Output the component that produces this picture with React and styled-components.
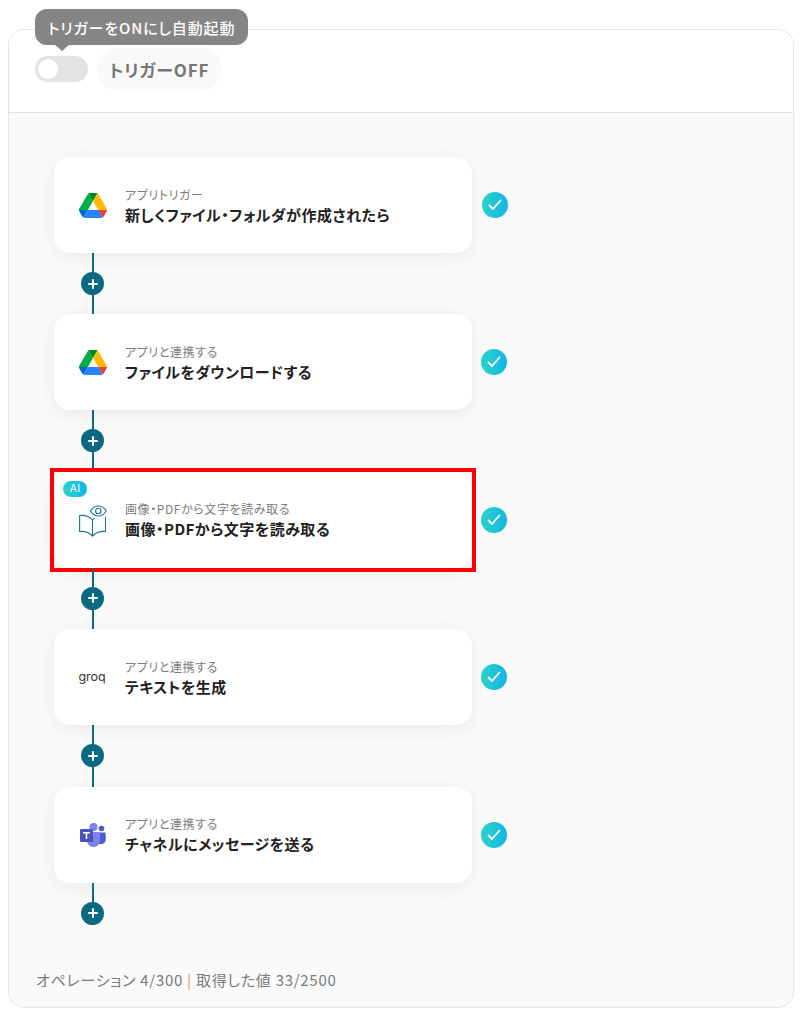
import styled, { createGlobalStyle } from 'styled-components'

const Global = createGlobalStyle`
  html, body {
    margin: 0;
    padding: 0;
    background: #fff;
    font-family: "Noto Sans CJK JP", "Noto Sans", sans-serif;
    font-feature-settings: "palt";
  }
  * { box-sizing: border-box; }
`

const Page = styled.div`
  width: 804px;
  height: 1019px;
  padding: 29px 10px 11px 8px;
`

const Panel = styled.div`
  height: 979px;
  border: 1px solid #e6e6e6;
  border-radius: 16px;
  background: #fafafa;
  display: flex;
  flex-direction: column;
`

const Header = styled.div`
  position: relative;
  height: 83px;
  flex: none;
  background: #fff;
  border-bottom: 1px solid #e3e3e3;
  border-radius: 15px 15px 0 0;
  padding: 17px 0 0 26px;
  display: flex;
  align-items: flex-start;
  gap: 9px;
`

const Tooltip = styled.div`
  position: absolute;
  left: 26px;
  top: -21px;
  height: 36px;
  width: 213px;
  padding: 0 0 0 13px;
  display: flex;
  align-items: center;
  border-radius: 12px;
  background: #858585;
  color: #fff;
  font-size: 15px;
  font-weight: 500;
  letter-spacing: 0.85px;
  white-space: nowrap;

  &::after {
    content: '';
    position: absolute;
    left: 20px;
    bottom: -6px;
    border-left: 7px solid transparent;
    border-right: 7px solid transparent;
    border-top: 6px solid #858585;
  }
`

const Toggle = styled.div`
  width: 53px;
  height: 26px;
  margin-top: 9px;
  border-radius: 13px;
  background: #e3e3e3;
  padding: 3px;
`

const Knob = styled.div`
  width: 20px;
  height: 20px;
  border-radius: 50%;
  background: #fff;
`

const TriggerLabel = styled.div`
  height: 44px;
  width: 125px;
  padding-left: 12px;
  border-radius: 22px;
  background: #f9f9f9;
  color: #767676;
  font-size: 17px;
  font-weight: 700;
  letter-spacing: 0.85px;
  display: flex;
  align-items: center;
`

const Flow = styled.div`
  flex: 1;
  padding: 44px 0 0 45px;
`

const StepRow = styled.div`
  display: flex;
  align-items: center;
  gap: ${p => p.$gap || 9}px;
`

const Card = styled.div`
  position: relative;
  width: 418px;
  height: 96px;
  flex: none;
  border-radius: 16px;
  background: #fff;
  box-shadow: 0 4px 20px rgba(0, 0, 0, 0.07);
  display: flex;
  align-items: center;
  padding-left: 20px;

  ${p => p.$selected && `
    &::after {
      content: '';
      position: absolute;
      inset: -4px;
      border: 4px solid #ff0000;
    }
  `}
`

const AiBadge = styled.div`
  position: absolute;
  left: 9px;
  top: 9px;
  width: 24px;
  height: 16px;
  border-radius: 8px;
  background: linear-gradient(90deg, #2bd4c8, #12b5e6);
  color: #fff;
  font-family: "Inter", sans-serif;
  font-size: 10.5px;
  font-weight: 400;
  letter-spacing: 0.3px;
  display: flex;
  align-items: center;
  justify-content: center;
`

const IconBox = styled.div`
  width: 38px;
  height: 38px;
  flex: none;
  display: flex;
  align-items: center;
  justify-content: center;
`

const GroqMark = styled.span`
  font-family: "Inter", sans-serif;
  font-size: 12.5px;
  font-weight: 400;
  letter-spacing: -0.1px;
  color: #333;
  transform: translate(-1px, -1px);
`

const CardText = styled.div`
  margin-left: 13px;
  margin-top: 2px;
  display: flex;
  flex-direction: column;
  gap: 0;
`

const SubLabel = styled.div`
  color: #7c7c7c;
  font-size: 12px;
  line-height: 18px;
  letter-spacing: 0.6px;
  margin-bottom: -1px;
`

const Title = styled.div`
  color: #222;
  font-size: 15px;
  font-weight: 700;
  line-height: 24px;
  letter-spacing: 0.48px;
`

const CheckBadge = styled.div`
  width: 26px;
  height: 26px;
  border-radius: 50%;
  background: linear-gradient(90deg, #2bd4c8, #12b5e6);
  display: flex;
  align-items: center;
  justify-content: center;
`

const Connector = styled.div`
  position: relative;
  width: 2px;
  height: 61.4px;
  margin-left: 38px;
  background: #0b6a80;
  ${p => p.$end && 'height: 31px;'}
`

const AddButton = styled.div`
  position: absolute;
  left: -11px;
  top: 19px;
  width: 23px;
  height: 23px;
  border-radius: 50%;
  background: #0b6a80;
  display: flex;
  align-items: center;
  justify-content: center;
`

const Footer = styled.div`
  flex: none;
  padding: 0 0 15px 27px;
  color: #7b7b7b;
  font-size: 15px;
  line-height: 24px;
  letter-spacing: 0.72px;
`

const Divider = styled.span`
  color: #d8a26a;
`

const DriveIcon = () => (
  <svg width="28" height="25" viewBox="0 0 87.3 78">
    <path d="m6.6 66.85 3.85 6.65c.8 1.4 1.95 2.5 3.3 3.3l13.75-23.8h-27.5c0 1.55.4 3.1 1.2 4.5z" fill="#0066da" />
    <path d="m43.65 25-13.75-23.8c-1.35.8-2.5 1.9-3.3 3.3l-25.4 44a9.06 9.06 0 0 0 -1.2 4.5h27.5z" fill="#00ac47" />
    <path d="m73.55 76.8c1.35-.8 2.5-1.9 3.3-3.3l1.6-2.75 7.65-13.25c.8-1.4 1.2-2.95 1.2-4.5h-27.502l5.852 11.5z" fill="#ea4335" />
    <path d="m43.65 25 13.75-23.8c-1.35-.8-2.9-1.2-4.5-1.2h-18.5c-1.6 0-3.15.45-4.5 1.2z" fill="#00832d" />
    <path d="m59.8 53h-32.3l-13.75 23.8c1.35.8 2.9 1.2 4.5 1.2h50.8c1.6 0 3.15-.45 4.5-1.2z" fill="#2684fc" />
    <path d="m73.4 26.5-12.7-22c-.8-1.4-1.95-2.5-3.3-3.3l-13.75 23.8 16.15 28h27.45c0-1.55-.4-3.1-1.2-4.5z" fill="#ffba00" />
  </svg>
)

const BookSvg = styled.svg`
  margin-top: 2px;
`

const BookIcon = () => (
  <BookSvg width="30" height="32" viewBox="-1 0 30 32" fill="none" stroke="#1f7488" strokeWidth="1.1" strokeLinejoin="round" strokeLinecap="round">
    <path d="M13.500 15C10.500 11.500 5 10 0.600 10.500V26.500C5 26 10 27.500 13.500 31V15z" />
    <path d="M13.500 15c.5-.6 1-1.200 1.600-1.700M13.500 31C17 27.500 22 26 26.500 26.500V12" />
    <path d="M11.500 6C13.500 2.700 16.500 1 19.300 1S25.200 2.700 27.300 6C25.200 9.200 22.100 11 19.300 11S13.500 9.200 11.500 6z" />
    <circle cx="19.300" cy="6" r="2.700" />
  </BookSvg>
)

const TeamsIcon = () => (
  <svg width="26" height="24" viewBox="0 0 26 24">
    <circle cx="21.500" cy="5.500" r="2.800" fill="#5059c9" />
    <path d="M18 9.500h6.500c.6 0 1.200.5 1.200 1.200v6c0 2.500-2 4.300-4.300 4.300H18z" fill="#5059c9" />
    <circle cx="13.500" cy="4" r="4" fill="#7b83eb" />
    <path d="M8 9h11c.6 0 1 .4 1 1v7.500c0 3.600-2.900 6.500-6.500 6.500S7 21.100 7 17.500V10c0-.6.400-1 1-1z" fill="#7b83eb" />
    <rect x="0" y="6" width="13" height="13" rx="1.200" fill="#4b53bc" />
    <path d="M3 9h7v1.500H7.300V16H5.700v-5.500H3z" fill="#fff" />
  </svg>
)

const CheckMark = () => (
  <svg width="14" height="12" viewBox="0 0 14 12" fill="none" stroke="#fff" strokeWidth="1.800" strokeLinecap="round" strokeLinejoin="round">
    <path d="M1.500 6.500l3.500 3.500 7.500-8.500" />
  </svg>
)

const PlusMark = () => (
  <svg width="10" height="10" viewBox="0 0 10 10" stroke="#fff" strokeWidth="2" strokeLinecap="round">
    <path d="M5 1v8M1 5h8" />
  </svg>
)

const steps = [
  { icon: <DriveIcon />, sub: 'アプリトリガー', title: '新しくファイル・フォルダが作成されたら', gap: 10 },
  { icon: <DriveIcon />, sub: 'アプリと連携する', title: 'ファイルをダウンロードする' },
  { icon: <BookIcon />, sub: '画像・PDFから文字を読み取る', title: '画像・PDFから文字を読み取る', selected: true },
  { icon: <GroqMark>groq</GroqMark>, sub: 'アプリと連携する', title: 'テキストを生成' },
  { icon: <TeamsIcon />, sub: 'アプリと連携する', title: 'チャネルにメッセージを送る' },
]

export default function App() {
  return (
    <Page>
      <Global />
      <Panel>
        <Header>
          <Tooltip>トリガーをONにし自動起動</Tooltip>
          <Toggle><Knob /></Toggle>
          <TriggerLabel>トリガーOFF</TriggerLabel>
        </Header>
        <Flow>
          {steps.map((s, i) => (
            <div key={i}>
              <StepRow $gap={s.gap}>
                <Card $selected={s.selected}>
                  {s.selected && <AiBadge>AI</AiBadge>}
                  <IconBox>{s.icon}</IconBox>
                  <CardText>
                    <SubLabel>{s.sub}</SubLabel>
                    <Title>{s.title}</Title>
                  </CardText>
                </Card>
                <CheckBadge><CheckMark /></CheckBadge>
              </StepRow>
              <Connector $end={i === steps.length - 1}>
                <AddButton><PlusMark /></AddButton>
              </Connector>
            </div>
          ))}
        </Flow>
        <Footer>オペレーション 4/300 <Divider>|</Divider> 取得した値 33/2500</Footer>
      </Panel>
    </Page>
  )
}
